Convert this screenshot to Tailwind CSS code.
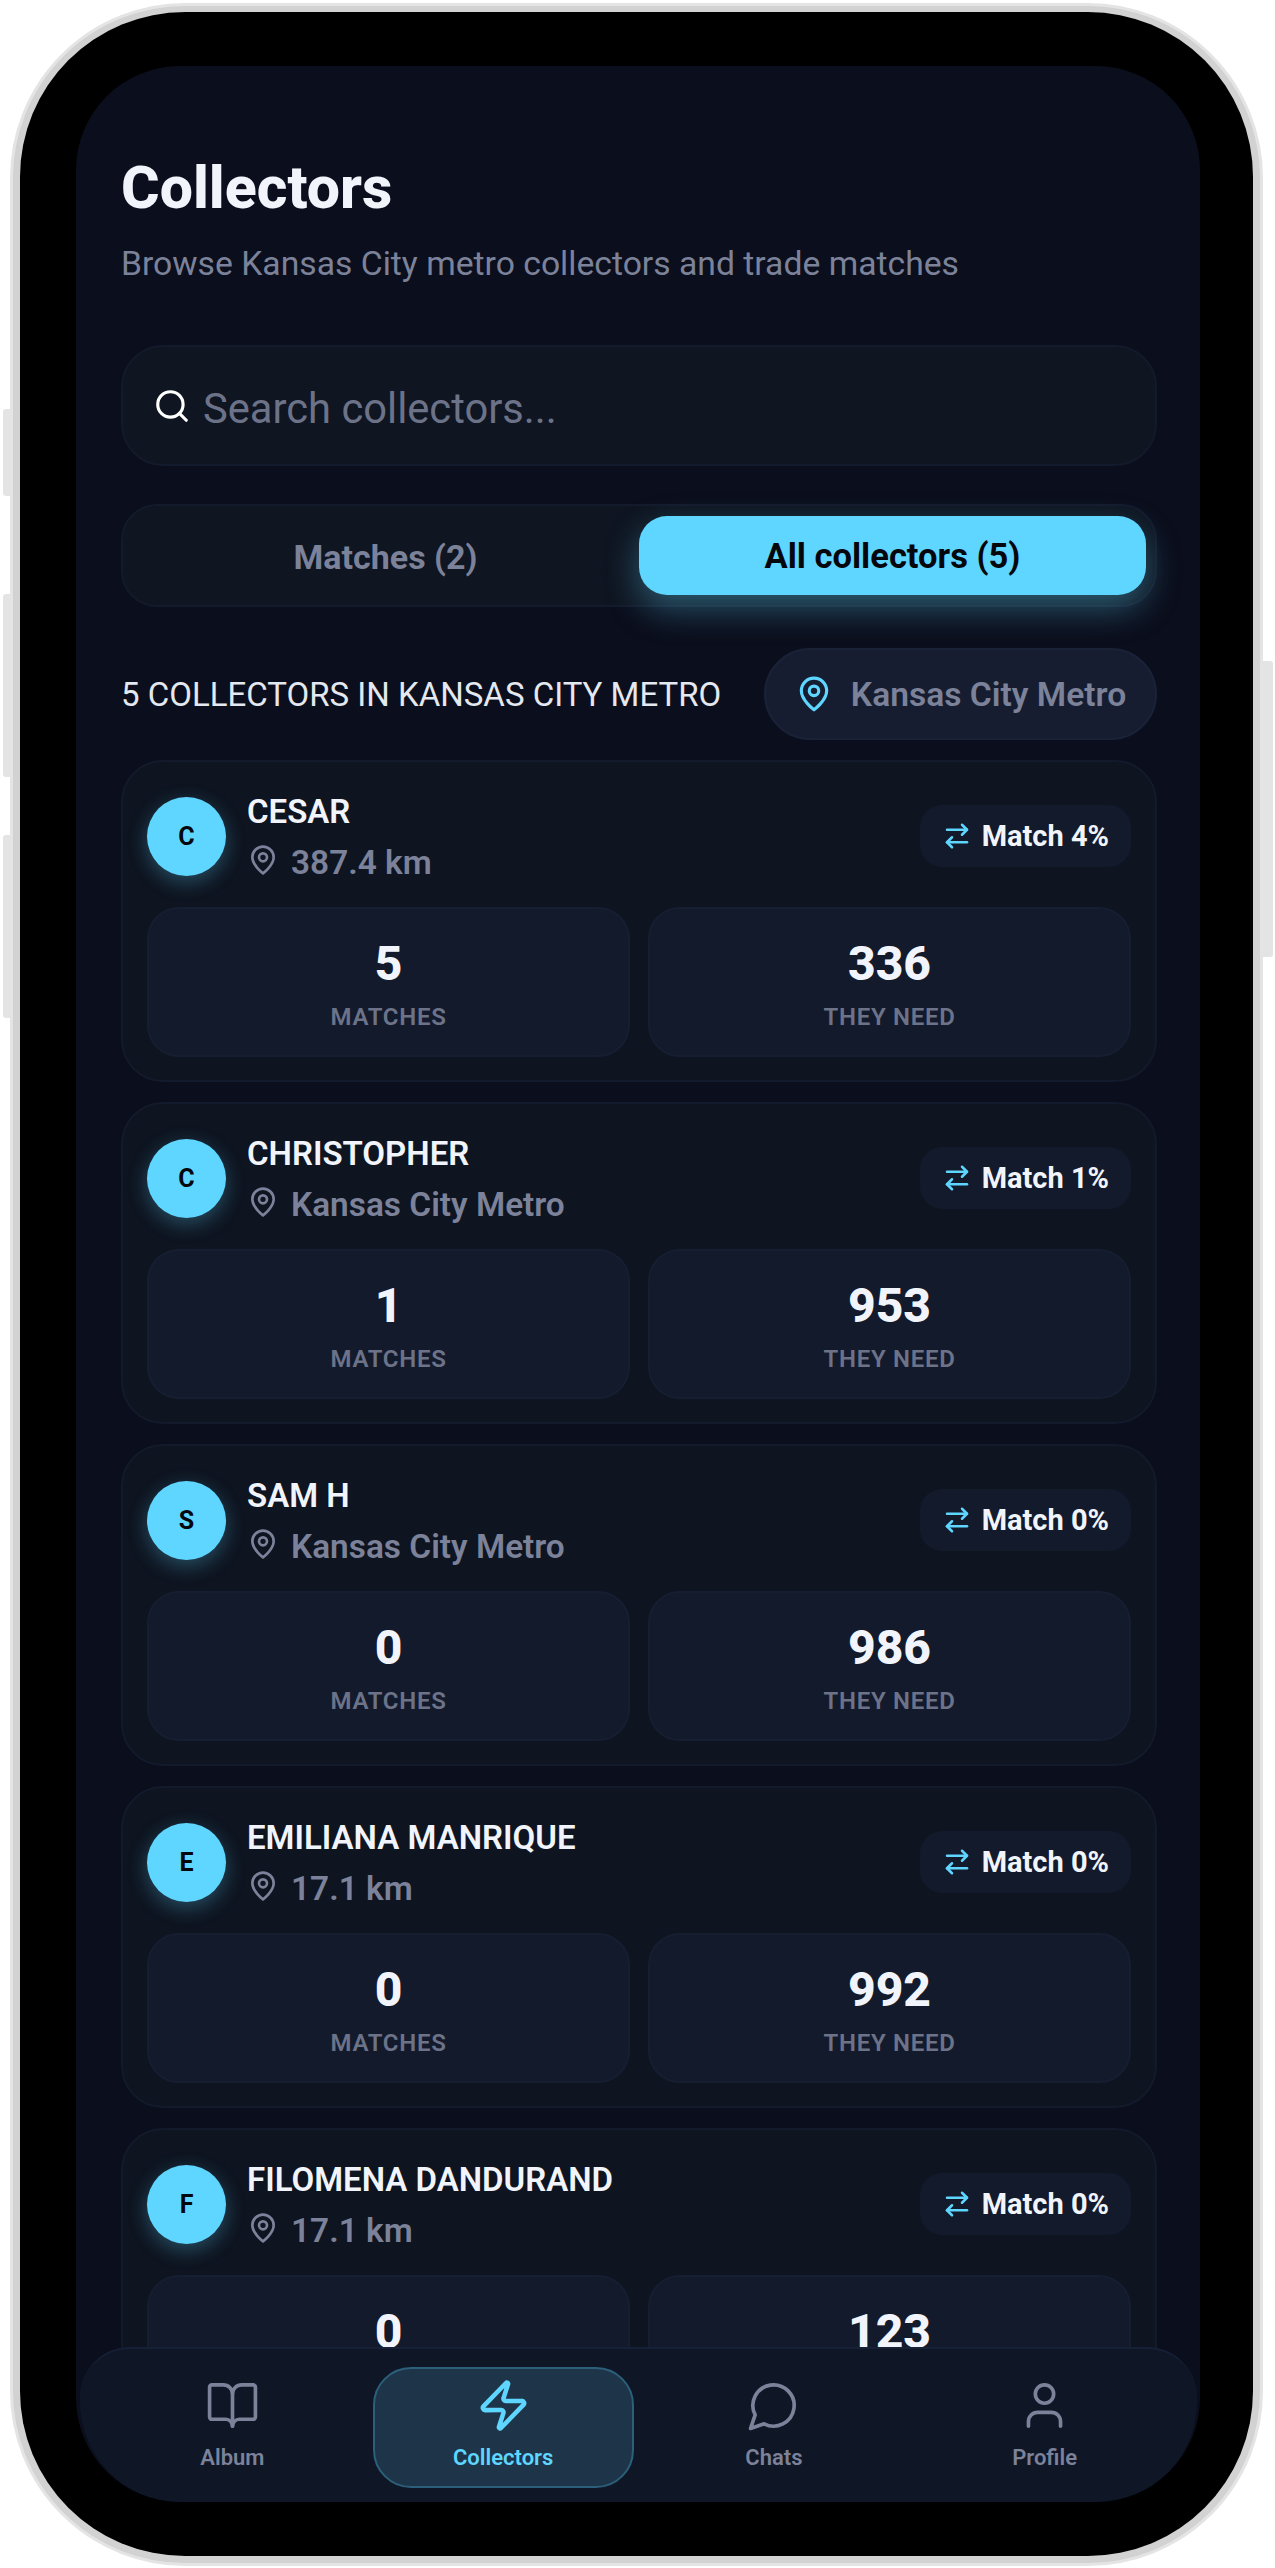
<!doctype html>
<html>
<head>
  <meta charset="UTF-8">
  <meta name="viewport" content="width=device-width, initial-scale=1.0">
  <script src="https://cdn.jsdelivr.net/npm/@tailwindcss/browser@4"></script>
  <title>Collectors</title>
</head>
<body class="bg-white font-['Roboto',sans-serif]">
  <div class="relative w-[1275px] h-[2568px] overflow-hidden">
    <!-- side buttons -->
    <div class="absolute left-[3px] top-[409px] w-[9px] h-[87px] bg-[#e4e4e4] rounded-l-[3px]"></div>
    <div class="absolute left-[3px] top-[594px] w-[9px] h-[183px] bg-[#e4e4e4] rounded-l-[3px]"></div>
    <div class="absolute left-[3px] top-[835px] w-[9px] h-[183px] bg-[#e4e4e4] rounded-l-[3px]"></div>
    <div class="absolute left-[1261px] top-[661px] w-[12px] h-[296px] bg-[#e4e4e4] rounded-r-[3px]"></div>

    <!-- phone frame -->
    <div class="absolute left-[10px] top-[3px] w-[1253px] h-[2563px] rounded-[175px] bg-[#d2d2d2] border-[3px] border-[#e4e4e4] px-[7px] pt-[6px] pb-[7px]">
      <div class="w-full h-full rounded-[165px] bg-black pt-[54px] pl-[56px] pr-[53px] pb-[54px]">
        <main class="relative w-[1124px] h-[2436px] rounded-[104px] overflow-hidden bg-[#0b0e1c]">
          <div class="pl-[45px] pr-[43px] pt-[88px]">
            <h1 class="text-[59px] leading-[68px] font-extrabold text-[#f1f5fb]">Collectors</h1>
            <p class="mt-[17px] text-[33.7px] leading-[50px] text-[#7b8299]">Browse Kansas City metro collectors and trade matches</p>

            <div class="mt-[56px] h-[121px] flex items-center gap-[12px] px-[30px] rounded-[42px] bg-[#0f1521] border-2 border-[#131a2b]">
              <svg class="w-[38px] h-[38px] text-white" viewBox="0 0 24 24" fill="none" stroke="currentColor" stroke-width="2" stroke-linecap="round" stroke-linejoin="round"><circle cx="11" cy="11" r="8"/><path d="m21 21-4.3-4.3"/></svg>
              <span class="pt-[7px] text-[41.7px] text-[#6c7389]">Search collectors...</span>
            </div>

            <div class="mt-[38px] h-[103px] flex items-center p-[9px] rounded-[36px] bg-[#0f1521] border-2 border-[#131a2b]">
              <div class="flex-1 pt-[3px] text-center text-[34px] font-bold text-[#7b8299]">Matches (2)</div>
              <div class="flex-1 h-[79px] flex items-center justify-center pt-[3px] rounded-[28px] bg-[#5fd6ff] text-[34.5px] font-bold text-[#05070d] shadow-[0_14px_34px_rgba(95,214,255,0.35)]">All collectors (5)</div>
            </div>

            <div class="mt-[41px] h-[92px] flex items-center justify-between">
              <span class="pt-[2px] text-[33px] text-[#e4e8f0]">5 COLLECTORS IN KANSAS CITY METRO</span>
              <div class="h-[92px] w-[393px] flex items-center justify-center gap-[18px] rounded-full bg-[#161d30] border-2 border-[#1a2238]">
                <svg class="w-[38px] h-[38px] text-[#5fd6ff]" viewBox="0 0 24 24" fill="none" stroke="currentColor" stroke-width="2" stroke-linecap="round" stroke-linejoin="round"><path d="M20 10c0 6-8 12-8 12s-8-6-8-12a8 8 0 0 1 16 0Z"/><circle cx="12" cy="10" r="3"/></svg>
                <span class="pt-[3px] text-[33.6px] font-semibold text-[#7b8299]">Kansas City Metro</span>
              </div>
            </div>

            <div class="mt-[20px] flex flex-col gap-[20px]">
              <!-- CESAR -->
              <article class="h-[322px] px-[24px] pt-[24px] rounded-[42px] bg-[#0e1420] border-2 border-[#131a2b]">
                <div class="h-[99px] flex items-center">
                  <div class="mt-[2px] w-[79px] h-[79px] shrink-0 flex items-center justify-center rounded-full bg-[#5fd6ff] text-[25px] font-bold text-[#05070d] shadow-[0_6px_20px_rgba(95,214,255,0.3)]">C</div>
                  <div class="ml-[21px] flex-1">
                    <div class="pt-[6px] text-[33px] leading-[43px] font-semibold text-[#f1f5fb]">CESAR</div>
                    <div class="flex items-center gap-[12px] text-[33.4px] leading-[49px] font-semibold text-[#7b8299]">
                      <svg class="w-[32px] h-[32px]" viewBox="0 0 24 24" fill="none" stroke="currentColor" stroke-width="2" stroke-linecap="round" stroke-linejoin="round"><path d="M20 10c0 6-8 12-8 12s-8-6-8-12a8 8 0 0 1 16 0Z"/><circle cx="12" cy="10" r="3"/></svg>
                      <span class="pt-[5px]">387.4 km</span>
                    </div>
                  </div>
                  <div class="h-[62px] flex items-center gap-[10px] px-[22px] rounded-[22px] bg-[#131a2c] text-[29px] font-bold text-[#f1f5fb]">
                    <svg class="w-[30px] h-[30px] text-[#5fd6ff]" viewBox="0 0 24 24" fill="none" stroke="currentColor" stroke-width="2" stroke-linecap="round" stroke-linejoin="round"><path d="m16 3 4 4-4 4"/><path d="M20 7H4"/><path d="m8 21-4-4 4-4"/><path d="M4 17h16"/></svg>
                    <span class="pt-[3px]">Match 4%</span>
                  </div>
                </div>
                <div class="mt-[22px] grid grid-cols-2 gap-[18px]">
                  <div class="h-[150px] flex flex-col items-center pt-[27px] rounded-[32px] bg-[#131a2c] border-2 border-[#161e31]">
                    <div class="text-[48px] leading-[56px] font-extrabold text-[#f1f5fb]">5</div>
                    <div class="mt-[8px] text-[24px] leading-[34px] font-semibold tracking-[0.7px] text-[#6c7389]">MATCHES</div>
                  </div>
                  <div class="h-[150px] flex flex-col items-center pt-[27px] rounded-[32px] bg-[#131a2c] border-2 border-[#161e31]">
                    <div class="text-[48px] leading-[56px] font-extrabold text-[#f1f5fb]">336</div>
                    <div class="mt-[8px] text-[24px] leading-[34px] font-semibold tracking-[0.7px] text-[#6c7389]">THEY NEED</div>
                  </div>
                </div>
              </article>

              <!-- CHRISTOPHER -->
              <article class="h-[322px] px-[24px] pt-[24px] rounded-[42px] bg-[#0e1420] border-2 border-[#131a2b]">
                <div class="h-[99px] flex items-center">
                  <div class="mt-[2px] w-[79px] h-[79px] shrink-0 flex items-center justify-center rounded-full bg-[#5fd6ff] text-[25px] font-bold text-[#05070d] shadow-[0_6px_20px_rgba(95,214,255,0.3)]">C</div>
                  <div class="ml-[21px] flex-1">
                    <div class="pt-[6px] text-[33px] leading-[43px] font-semibold text-[#f1f5fb]">CHRISTOPHER</div>
                    <div class="flex items-center gap-[12px] text-[33.4px] leading-[49px] font-semibold text-[#7b8299]">
                      <svg class="w-[32px] h-[32px]" viewBox="0 0 24 24" fill="none" stroke="currentColor" stroke-width="2" stroke-linecap="round" stroke-linejoin="round"><path d="M20 10c0 6-8 12-8 12s-8-6-8-12a8 8 0 0 1 16 0Z"/><circle cx="12" cy="10" r="3"/></svg>
                      <span class="pt-[5px]">Kansas City Metro</span>
                    </div>
                  </div>
                  <div class="h-[62px] flex items-center gap-[10px] px-[22px] rounded-[22px] bg-[#131a2c] text-[29px] font-bold text-[#f1f5fb]">
                    <svg class="w-[30px] h-[30px] text-[#5fd6ff]" viewBox="0 0 24 24" fill="none" stroke="currentColor" stroke-width="2" stroke-linecap="round" stroke-linejoin="round"><path d="m16 3 4 4-4 4"/><path d="M20 7H4"/><path d="m8 21-4-4 4-4"/><path d="M4 17h16"/></svg>
                    <span class="pt-[3px]">Match 1%</span>
                  </div>
                </div>
                <div class="mt-[22px] grid grid-cols-2 gap-[18px]">
                  <div class="h-[150px] flex flex-col items-center pt-[27px] rounded-[32px] bg-[#131a2c] border-2 border-[#161e31]">
                    <div class="text-[48px] leading-[56px] font-extrabold text-[#f1f5fb]">1</div>
                    <div class="mt-[8px] text-[24px] leading-[34px] font-semibold tracking-[0.7px] text-[#6c7389]">MATCHES</div>
                  </div>
                  <div class="h-[150px] flex flex-col items-center pt-[27px] rounded-[32px] bg-[#131a2c] border-2 border-[#161e31]">
                    <div class="text-[48px] leading-[56px] font-extrabold text-[#f1f5fb]">953</div>
                    <div class="mt-[8px] text-[24px] leading-[34px] font-semibold tracking-[0.7px] text-[#6c7389]">THEY NEED</div>
                  </div>
                </div>
              </article>

              <!-- SAM H -->
              <article class="h-[322px] px-[24px] pt-[24px] rounded-[42px] bg-[#0e1420] border-2 border-[#131a2b]">
                <div class="h-[99px] flex items-center">
                  <div class="mt-[2px] w-[79px] h-[79px] shrink-0 flex items-center justify-center rounded-full bg-[#5fd6ff] text-[25px] font-bold text-[#05070d] shadow-[0_6px_20px_rgba(95,214,255,0.3)]">S</div>
                  <div class="ml-[21px] flex-1">
                    <div class="pt-[6px] text-[33px] leading-[43px] font-semibold text-[#f1f5fb]">SAM H</div>
                    <div class="flex items-center gap-[12px] text-[33.4px] leading-[49px] font-semibold text-[#7b8299]">
                      <svg class="w-[32px] h-[32px]" viewBox="0 0 24 24" fill="none" stroke="currentColor" stroke-width="2" stroke-linecap="round" stroke-linejoin="round"><path d="M20 10c0 6-8 12-8 12s-8-6-8-12a8 8 0 0 1 16 0Z"/><circle cx="12" cy="10" r="3"/></svg>
                      <span class="pt-[5px]">Kansas City Metro</span>
                    </div>
                  </div>
                  <div class="h-[62px] flex items-center gap-[10px] px-[22px] rounded-[22px] bg-[#131a2c] text-[29px] font-bold text-[#f1f5fb]">
                    <svg class="w-[30px] h-[30px] text-[#5fd6ff]" viewBox="0 0 24 24" fill="none" stroke="currentColor" stroke-width="2" stroke-linecap="round" stroke-linejoin="round"><path d="m16 3 4 4-4 4"/><path d="M20 7H4"/><path d="m8 21-4-4 4-4"/><path d="M4 17h16"/></svg>
                    <span class="pt-[3px]">Match 0%</span>
                  </div>
                </div>
                <div class="mt-[22px] grid grid-cols-2 gap-[18px]">
                  <div class="h-[150px] flex flex-col items-center pt-[27px] rounded-[32px] bg-[#131a2c] border-2 border-[#161e31]">
                    <div class="text-[48px] leading-[56px] font-extrabold text-[#f1f5fb]">0</div>
                    <div class="mt-[8px] text-[24px] leading-[34px] font-semibold tracking-[0.7px] text-[#6c7389]">MATCHES</div>
                  </div>
                  <div class="h-[150px] flex flex-col items-center pt-[27px] rounded-[32px] bg-[#131a2c] border-2 border-[#161e31]">
                    <div class="text-[48px] leading-[56px] font-extrabold text-[#f1f5fb]">986</div>
                    <div class="mt-[8px] text-[24px] leading-[34px] font-semibold tracking-[0.7px] text-[#6c7389]">THEY NEED</div>
                  </div>
                </div>
              </article>

              <!-- EMILIANA -->
              <article class="h-[322px] px-[24px] pt-[24px] rounded-[42px] bg-[#0e1420] border-2 border-[#131a2b]">
                <div class="h-[99px] flex items-center">
                  <div class="mt-[2px] w-[79px] h-[79px] shrink-0 flex items-center justify-center rounded-full bg-[#5fd6ff] text-[25px] font-bold text-[#05070d] shadow-[0_6px_20px_rgba(95,214,255,0.3)]">E</div>
                  <div class="ml-[21px] flex-1">
                    <div class="pt-[6px] text-[33px] leading-[43px] font-semibold text-[#f1f5fb]">EMILIANA MANRIQUE</div>
                    <div class="flex items-center gap-[12px] text-[33.4px] leading-[49px] font-semibold text-[#7b8299]">
                      <svg class="w-[32px] h-[32px]" viewBox="0 0 24 24" fill="none" stroke="currentColor" stroke-width="2" stroke-linecap="round" stroke-linejoin="round"><path d="M20 10c0 6-8 12-8 12s-8-6-8-12a8 8 0 0 1 16 0Z"/><circle cx="12" cy="10" r="3"/></svg>
                      <span class="pt-[5px]">17.1 km</span>
                    </div>
                  </div>
                  <div class="h-[62px] flex items-center gap-[10px] px-[22px] rounded-[22px] bg-[#131a2c] text-[29px] font-bold text-[#f1f5fb]">
                    <svg class="w-[30px] h-[30px] text-[#5fd6ff]" viewBox="0 0 24 24" fill="none" stroke="currentColor" stroke-width="2" stroke-linecap="round" stroke-linejoin="round"><path d="m16 3 4 4-4 4"/><path d="M20 7H4"/><path d="m8 21-4-4 4-4"/><path d="M4 17h16"/></svg>
                    <span class="pt-[3px]">Match 0%</span>
                  </div>
                </div>
                <div class="mt-[22px] grid grid-cols-2 gap-[18px]">
                  <div class="h-[150px] flex flex-col items-center pt-[27px] rounded-[32px] bg-[#131a2c] border-2 border-[#161e31]">
                    <div class="text-[48px] leading-[56px] font-extrabold text-[#f1f5fb]">0</div>
                    <div class="mt-[8px] text-[24px] leading-[34px] font-semibold tracking-[0.7px] text-[#6c7389]">MATCHES</div>
                  </div>
                  <div class="h-[150px] flex flex-col items-center pt-[27px] rounded-[32px] bg-[#131a2c] border-2 border-[#161e31]">
                    <div class="text-[48px] leading-[56px] font-extrabold text-[#f1f5fb]">992</div>
                    <div class="mt-[8px] text-[24px] leading-[34px] font-semibold tracking-[0.7px] text-[#6c7389]">THEY NEED</div>
                  </div>
                </div>
              </article>

              <!-- FILOMENA -->
              <article class="h-[322px] px-[24px] pt-[24px] rounded-[42px] bg-[#0e1420] border-2 border-[#131a2b]">
                <div class="h-[99px] flex items-center">
                  <div class="mt-[2px] w-[79px] h-[79px] shrink-0 flex items-center justify-center rounded-full bg-[#5fd6ff] text-[25px] font-bold text-[#05070d] shadow-[0_6px_20px_rgba(95,214,255,0.3)]">F</div>
                  <div class="ml-[21px] flex-1">
                    <div class="pt-[6px] text-[33px] leading-[43px] font-semibold text-[#f1f5fb]">FILOMENA DANDURAND</div>
                    <div class="flex items-center gap-[12px] text-[33.4px] leading-[49px] font-semibold text-[#7b8299]">
                      <svg class="w-[32px] h-[32px]" viewBox="0 0 24 24" fill="none" stroke="currentColor" stroke-width="2" stroke-linecap="round" stroke-linejoin="round"><path d="M20 10c0 6-8 12-8 12s-8-6-8-12a8 8 0 0 1 16 0Z"/><circle cx="12" cy="10" r="3"/></svg>
                      <span class="pt-[5px]">17.1 km</span>
                    </div>
                  </div>
                  <div class="h-[62px] flex items-center gap-[10px] px-[22px] rounded-[22px] bg-[#131a2c] text-[29px] font-bold text-[#f1f5fb]">
                    <svg class="w-[30px] h-[30px] text-[#5fd6ff]" viewBox="0 0 24 24" fill="none" stroke="currentColor" stroke-width="2" stroke-linecap="round" stroke-linejoin="round"><path d="m16 3 4 4-4 4"/><path d="M20 7H4"/><path d="m8 21-4-4 4-4"/><path d="M4 17h16"/></svg>
                    <span class="pt-[3px]">Match 0%</span>
                  </div>
                </div>
                <div class="mt-[22px] grid grid-cols-2 gap-[18px]">
                  <div class="h-[150px] flex flex-col items-center pt-[27px] rounded-[32px] bg-[#131a2c] border-2 border-[#161e31]">
                    <div class="text-[48px] leading-[56px] font-extrabold text-[#f1f5fb]">0</div>
                    <div class="mt-[8px] text-[24px] leading-[34px] font-semibold tracking-[0.7px] text-[#6c7389]">MATCHES</div>
                  </div>
                  <div class="h-[150px] flex flex-col items-center pt-[27px] rounded-[32px] bg-[#131a2c] border-2 border-[#161e31]">
                    <div class="text-[48px] leading-[56px] font-extrabold text-[#f1f5fb]">123</div>
                    <div class="mt-[8px] text-[24px] leading-[34px] font-semibold tracking-[0.7px] text-[#6c7389]">THEY NEED</div>
                  </div>
                </div>
              </article>
            </div>
          </div>

          <!-- bottom nav over the list -->
          <nav class="absolute left-[4px] right-[3px] bottom-0 h-[155px] grid grid-cols-4 items-start gap-[10px] px-[22px] pt-[18px] rounded-t-[50px] rounded-b-[100px] bg-[#0f1626] border-t-2 border-[#162036]">
            <a class="h-[121px] flex flex-col items-center pt-[9px] border-2 border-transparent text-[#7b8299]">
              <svg class="w-[55px] h-[55px]" viewBox="0 0 24 24" fill="none" stroke="currentColor" stroke-width="1.6" stroke-linecap="round" stroke-linejoin="round"><path d="M12 7v14"/><path d="M3 18a1 1 0 0 1-1-1V4a1 1 0 0 1 1-1h5a4 4 0 0 1 4 4 4 4 0 0 1 4-4h5a1 1 0 0 1 1 1v13a1 1 0 0 1-1 1h-6a3 3 0 0 0-3 3 3 3 0 0 0-3-3z"/></svg>
              <span class="mt-[10px] text-[22px] leading-[30px] font-semibold">Album</span>
            </a>
            <a class="h-[121px] flex flex-col items-center pt-[9px] rounded-[38px] bg-[#1e3449] border-2 border-[#2b5f7a] text-[#5fd6ff]">
              <svg class="w-[55px] h-[55px]" viewBox="0 0 24 24" fill="none" stroke="currentColor" stroke-width="2" stroke-linecap="round" stroke-linejoin="round"><path d="M4 14a1 1 0 0 1-.78-1.63l9.9-10.2a.5.5 0 0 1 .86.46l-1.92 6.02A1 1 0 0 0 13 10h7a1 1 0 0 1 .78 1.63l-9.9 10.2a.5.5 0 0 1-.86-.46l1.92-6.02A1 1 0 0 0 11 14z"/></svg>
              <span class="mt-[10px] text-[22px] leading-[30px] font-semibold">Collectors</span>
            </a>
            <a class="h-[121px] flex flex-col items-center pt-[9px] border-2 border-transparent text-[#7b8299]">
              <svg class="w-[55px] h-[55px]" viewBox="0 0 24 24" fill="none" stroke="currentColor" stroke-width="1.6" stroke-linecap="round" stroke-linejoin="round"><path d="M7.9 20A9 9 0 1 0 4 16.1L2 22Z"/></svg>
              <span class="mt-[10px] text-[22px] leading-[30px] font-semibold">Chats</span>
            </a>
            <a class="h-[121px] flex flex-col items-center pt-[9px] border-2 border-transparent text-[#7b8299]">
              <svg class="w-[55px] h-[55px]" viewBox="0 0 24 24" fill="none" stroke="currentColor" stroke-width="1.6" stroke-linecap="round" stroke-linejoin="round"><path d="M19 21v-2a4 4 0 0 0-4-4H9a4 4 0 0 0-4 4v2"/><circle cx="12" cy="7" r="4"/></svg>
              <span class="mt-[10px] text-[22px] leading-[30px] font-semibold">Profile</span>
            </a>
          </nav>
        </main>
      </div>
    </div>
  </div>
</body>
</html>
